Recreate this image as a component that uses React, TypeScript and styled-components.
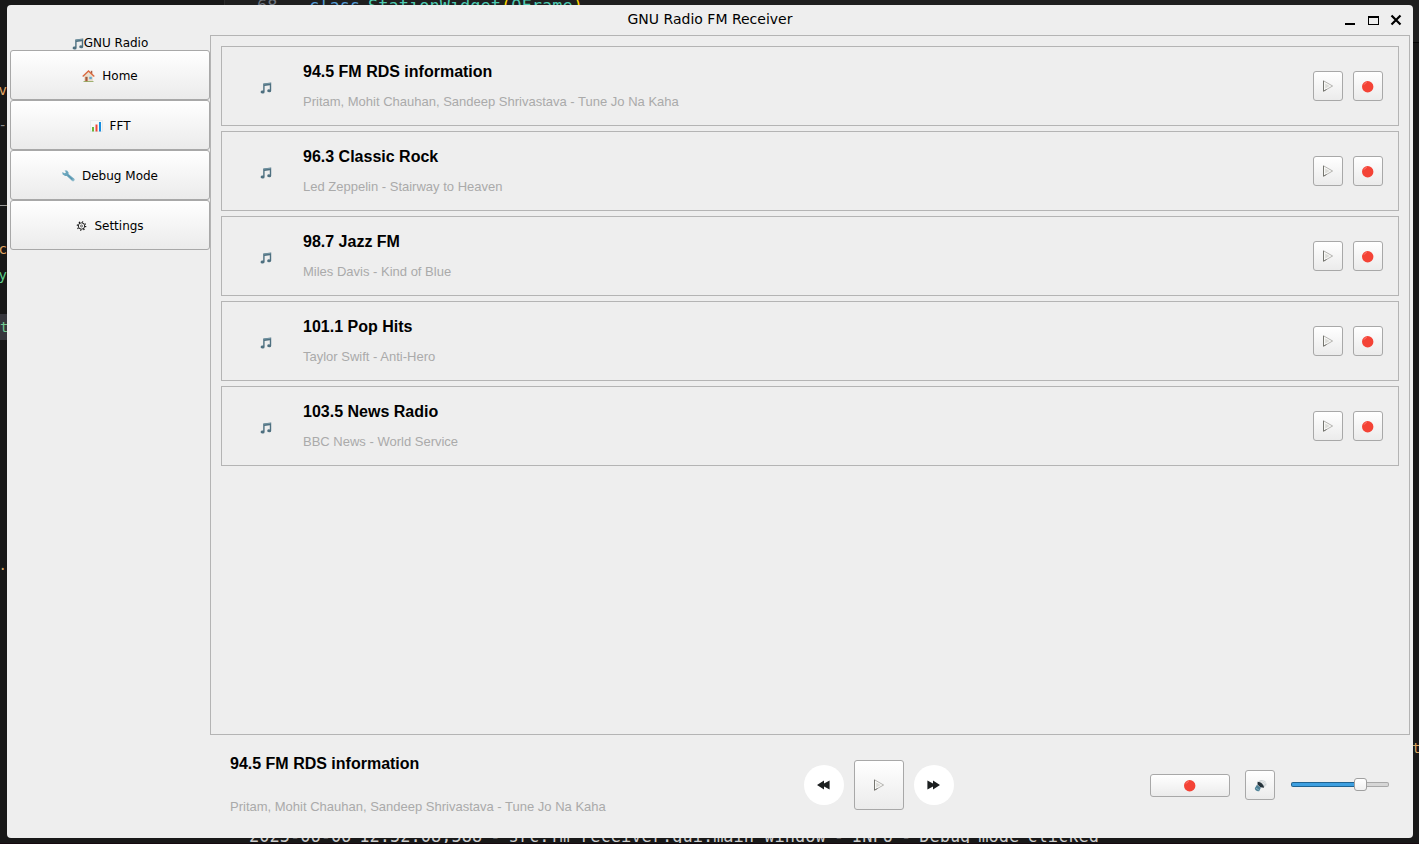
import React, { useState } from "react";
import styled, { createGlobalStyle, css } from "styled-components";

const GlobalStyle = createGlobalStyle`
  *, *::before, *::after { box-sizing: border-box; }
  html, body { margin: 0; padding: 0; background: #181818; }
  button { font: inherit; color: inherit; margin: 0; padding: 0; }
`;

const uiFont = `"DejaVu Sans", sans-serif`;
const textFont = `"Liberation Sans", Arial, sans-serif`;
const codeFont = `"DejaVu Sans Mono", monospace`;

const Desktop = styled.div`
  position: relative;
  min-height: 100vh;
  display: flex;
  padding: 5px 6px 6px 7px;
  background: #181818;
  overflow: hidden;
  font-family: ${uiFont};
`;

/* Code editor and terminal lying under the application window */
const EditorPane = styled.div`
  position: absolute;
  top: 0;
  left: 224px;
  right: 0;
  height: 43px;
  background: #1f1f1f;
  border-left: 1px solid #2b2b2b;
  border-bottom: 1px solid #050505;
`;

const CodeLine = styled.div`
  position: absolute;
  top: -4px;
  left: 32px;
  display: grid;
  grid-template-columns: 52px 59px auto;
  font: 17px/20px ${codeFont};
  white-space: pre;
`;

const LogLine = styled.div`
  position: absolute;
  left: 249px;
  bottom: -2px;
  width: 850px;
  display: flex;
  justify-content: space-between;
  font: 17px/20px ${codeFont};
  color: #cccccc;
  white-space: pre;
`;

const BottomEdge = styled.div`
  position: absolute;
  left: 0;
  right: 0;
  bottom: 0;
  height: 1px;
  background: #14080e;
`;

const Tint = styled.span<{ $c: string }>`
  color: ${(p) => p.$c};
`;

const EdgeGlyph = styled.span<{ $y: number; $c: string; $right?: boolean; $lit?: boolean }>`
  position: absolute;
  top: ${(p) => p.$y}px;
  ${(p) => (p.$right ? "right: 0;" : "left: 0;")}
  width: 7px;
  height: 26px;
  display: flex;
  justify-content: ${(p) => (p.$right || p.$lit ? "flex-start" : "flex-end")};
  align-items: center;
  overflow: hidden;
  font: 14px/26px ${codeFont};
  color: ${(p) => p.$c};
  background: ${(p) => (p.$lit ? "#37373d" : "transparent")};
`;

const Window = styled.main`
  position: relative;
  flex: 1;
  min-width: 0;
  display: flex;
  flex-direction: column;
  background: #eeeeee;
  border-radius: 4px;
  color: #000000;
`;

const TitleBar = styled.header`
  display: grid;
  grid-template-columns: 80px 1fr 80px;
  align-items: center;
  height: 30px;
`;

const WindowTitle = styled.h1`
  grid-column: 2;
  margin: 0;
  padding-bottom: 2px;
  font: 14px/16px ${uiFont};
  text-align: center;
`;

const WindowControls = styled.div`
  display: flex;
  justify-content: flex-end;
  gap: 7px;
  padding-right: 9px;
`;

const WindowButton = styled.button`
  width: 16px;
  height: 16px;
  border: 0;
  background: none;
  svg { display: block; }
`;

const Body = styled.div`
  flex: 1;
  display: flex;
  padding: 0 3px 3px;
`;

const Sidebar = styled.nav`
  width: 200px;
  flex: none;
  display: flex;
  flex-direction: column;
  font-size: 12px;
  line-height: 15px;
`;

const Brand = styled.div`
  display: flex;
  align-items: center;
  justify-content: center;
  height: 15px;
  padding-top: 2px;
`;

const raised = css`
  border: 1px solid #a8a8a8;
  border-radius: 3px;
  background: linear-gradient(#ffffff, #ebebeb);
  display: flex;
  align-items: center;
  justify-content: center;
  svg { display: block; }
`;

const NavButton = styled.button`
  ${raised}
  height: 50px;
  padding-top: 2px;
  gap: 7px;
`;

const Content = styled.div`
  flex: 1;
  min-width: 0;
  display: flex;
  flex-direction: column;
`;

const StationPanel = styled.section`
  flex: 1;
  border: 1px solid #b4b4b4;
  padding: 10px;
`;

const StationList = styled.ul`
  list-style: none;
  margin: 0;
  padding: 0;
  display: flex;
  flex-direction: column;
  gap: 5px;
`;

const StationCard = styled.li`
  height: 80px;
  display: flex;
  align-items: center;
  gap: 10px;
  padding: 0 15px 0 17px;
  border: 1px solid #b4b4b4;
`;

const StationIcon = styled.div`
  flex: none;
  width: 54px;
  display: flex;
  justify-content: center;
  padding-top: 3px;
`;

const TextBlock = styled.div<{ $gap: number; $grow?: boolean }>`
  flex: ${(p) => (p.$grow ? 1 : "none")};
  min-width: 0;
  display: flex;
  flex-direction: column;
  gap: ${(p) => p.$gap}px;
`;

const StationName = styled.h2`
  margin: 0;
  font: bold 16px/18px ${textFont};
`;

const TrackName = styled.p`
  margin: 0;
  font: 13px/16px ${textFont};
  color: #aaaaaa;
`;

const ToolButton = styled.button<{ $w: number; $h: number }>`
  ${raised}
  flex: none;
  width: ${(p) => p.$w}px;
  height: ${(p) => p.$h}px;
`;

const RoundButton = styled.button`
  width: 40px;
  height: 40px;
  border: 0;
  border-radius: 50%;
  background: #ffffff;
  display: flex;
  align-items: center;
  justify-content: center;
`;

const Player = styled.footer`
  height: 100px;
  display: flex;
  align-items: center;
  justify-content: space-between;
  padding: 0 20px;
`;

const Transport = styled.div`
  display: flex;
  align-items: center;
  gap: 10px;
  padding-left: 2px;
`;

const Output = styled.div`
  display: flex;
  align-items: center;
  gap: 15px;
`;

const VolumeSlider = styled.input`
  appearance: none;
  width: 100px;
  height: 16px;
  margin: 0;
  padding: 0 1px 2px;
  background: none;
  &::-webkit-slider-runnable-track {
    height: 5px;
    border: 1px solid transparent;
    border-radius: 2px;
    background:
      linear-gradient(#3d9fe0, #3d9fe0) 0 0 / ${(p) => Number(p.value)}% 100% no-repeat padding-box,
      linear-gradient(#1f6391, #1f6391) 0 0 / ${(p) => Number(p.value)}% 100% no-repeat border-box,
      linear-gradient(#d6d6d6, #d6d6d6) padding-box,
      linear-gradient(#a8a8a8, #a8a8a8) border-box;
  }
  &::-webkit-slider-thumb {
    appearance: none;
    width: 13px;
    height: 13px;
    margin-top: -5px;
    border: 1px solid #a0a0a0;
    border-radius: 3px;
    background: linear-gradient(#ffffff, #f0f0f0);
  }
`;

const NoteIcon = () => (
  <svg width="12" height="12" viewBox="0 0 12 12" aria-hidden="true">
    <path d="M3.2 1.5 11.2.4v8.4a2 1.5 0 1 1-1.4-1.4V3.2L4.6 4v6a2 1.5 0 1 1-1.4-1.4z" fill="#4e7080" />
    <path d="M3.8 1.8 10.6.9v.8l-6.8.9z" fill="#82a3b0" />
  </svg>
);

const HomeIcon = () => (
  <svg width="13" height="12" viewBox="0 0 13 12" aria-hidden="true">
    <path d="M2 5.5 6.5 1.5 11 5.5V11.5H2z" fill="#eadfce" />
    <path d="M8.8.8h1.5v3H8.8z" fill="#a85f43" />
    <path d="M.7 6.4 6.5 1l5.8 5.4" fill="none" stroke="#d9683f" strokeWidth="1.4" />
    <path d="M3.3 6.8h2.3v4.7H3.3z" fill="#a8593a" />
    <path d="M7.3 6.8h2.5v2.4H7.3z" fill="#62a8cf" />
    <path d="M1.5 11h10v.8h-10z" fill="#8aa255" />
  </svg>
);

const ChartIcon = () => (
  <svg width="13" height="12" viewBox="0 0 13 12" aria-hidden="true">
    <path d="M.5.5h12v11H.5z" fill="#f5f7f7" stroke="#dde3e5" strokeWidth=".6" />
    <path d="M2 7h2v4.5H2z" fill="#69b53c" />
    <path d="M5.5 4.5h2v7h-2z" fill="#ef4638" />
    <path d="M9 2h2v9.5H9z" fill="#168de0" />
  </svg>
);

const WrenchIcon = () => (
  <svg width="13" height="12" viewBox="0 0 13 12" aria-hidden="true">
    <path d="M2.6.4 5 .6l1.6 2-.1 1.3 5.7 4.9c1.1 1.1-.6 3.2-2 2.2L4.8 5.9l-1.7.1L.5 4.3.4 2l2 1.3 1.2-.3.2-1z" fill="#6ba6bd" />
    <path d="m5.5 5 5.3 4.8" stroke="#4a87a3" strokeWidth=".7" />
    <circle cx="11" cy="10" r=".6" fill="#e8eef0" />
  </svg>
);

const GearIcon = () => (
  <svg width="11" height="12" viewBox="0 0 11 12" fill="none" stroke="#111111" aria-hidden="true">
    <circle cx="5.5" cy="6" r="3.2" strokeWidth=".9" />
    <circle cx="5.5" cy="6" r="4.2" strokeWidth="1.2" strokeDasharray="1.2 2.1" />
    <circle cx="5.5" cy="6" r="1" strokeWidth=".6" />
  </svg>
);

const PlayIcon = () => (
  <svg width="12" height="12" viewBox="0 0 12 12" aria-hidden="true">
    <path d="M1.5.8v10.4L10.6 6z" fill="#f8f8f6" stroke="#a3a29e" strokeWidth=".8" />
    <path d="M3.2 3.4v5.2L7.8 6z" fill="#dcdcd8" />
    <path d="M1.5.8v10.4l3-1.7" fill="none" stroke="#66665f" strokeWidth=".8" />
  </svg>
);

const RecordIcon = () => (
  <svg width="12" height="14" viewBox="0 0 12 14" aria-hidden="true">
    <circle cx="5.7" cy="7.8" r="5.7" fill="#f44336" />
    <path d="M2 5.7q1-1.9 2.7-2.3" fill="none" stroke="#ff8078" strokeWidth=".9" />
  </svg>
);

const SpeakerIcon = () => (
  <svg width="13" height="14" viewBox="0 0 13 14" aria-hidden="true">
    <path d="M4.5 3.4C6.8.8 13 1.5 12.4 7.2L9.8 9.6z" fill="#d0d6d8" />
    <path d="m6.5 2.8 5 5M8.5 2l3.5 4M6 4.8l5-2.5M8 6.5l4-2.3" stroke="#f4f5f5" strokeWidth=".5" />
    <path d="M3.6 3.8C6.3 3.6 9.9 6.6 10 9.8L6.3 9.2 3.5 6.6z" fill="#26333b" />
    <path d="m3 6.7 3.8 3.1-1.6 3.4c-2 .7-4.8-.9-4.3-3.1z" fill="#4f8196" />
    <path d="m1.9 10 3 2" stroke="#83b2c2" strokeWidth="1" />
  </svg>
);

const SkipIcon = ({ back = false }: { back?: boolean }) => (
  <svg width="13" height="10" viewBox="0 0 13 10" fill="#1c1f20" aria-hidden="true">
    <path d={back ? "M0 5 7 .5v3L12.6.5v9L7 6.5v3z" : "M13 5 6 .5v3L.4.5v9L6 6.5v3z"} />
  </svg>
);

const MinimizeIcon = () => (
  <svg width="16" height="16" viewBox="0 0 16 16" aria-hidden="true">
    <path d="M3 11h10v2H3z" />
  </svg>
);

const MaximizeIcon = () => (
  <svg width="16" height="16" viewBox="0 0 16 16" aria-hidden="true">
    <path fillRule="evenodd" d="M3 4h11v9H3zM4 6v6h9V6z" />
  </svg>
);

const CloseIcon = () => (
  <svg width="16" height="16" viewBox="0 0 16 16" aria-hidden="true">
    <path d="m3.5 3.5 9 9m0-9-9 9" stroke="#000000" strokeWidth="2.2" />
  </svg>
);

const navItems = [
  { label: "Home", Icon: HomeIcon },
  { label: "FFT", Icon: ChartIcon },
  { label: "Debug Mode", Icon: WrenchIcon },
  { label: "Settings", Icon: GearIcon },
];

const stations = [
  { name: "94.5 FM RDS information", track: "Pritam, Mohit Chauhan, Sandeep Shrivastava - Tune Jo Na Kaha" },
  { name: "96.3 Classic Rock", track: "Led Zeppelin - Stairway to Heaven" },
  { name: "98.7 Jazz FM", track: "Miles Davis - Kind of Blue" },
  { name: "101.1 Pop Hits", track: "Taylor Swift - Anti-Hero" },
  { name: "103.5 News Radio", track: "BBC News - World Service" },
];

const logWords = "2025-06-06 12:52:08,588 - src.fm_receiver.gui.main_window - INFO - Debug mode clicked".split(" ");

const Backdrop = () => (
  <div aria-hidden="true">
    <EditorPane>
      <CodeLine>
        <Tint $c="#6e7681">68</Tint>
        <Tint $c="#569cd6">class</Tint>
        <span>
          <Tint $c="#4ec9b0">StationWidget</Tint>
          <Tint $c="#ffd700">(</Tint>
          <Tint $c="#4ec9b0">QFrame</Tint>
          <Tint $c="#ffd700">)</Tint>
        </span>
      </CodeLine>
    </EditorPane>
    <EdgeGlyph $y={77} $c="#e2a765">v</EdgeGlyph>
    <EdgeGlyph $y={112} $c="#8c8c8c">-</EdgeGlyph>
    <EdgeGlyph $y={191} $c="#9a9a9a">—</EdgeGlyph>
    <EdgeGlyph $y={236} $c="#e2a765">c</EdgeGlyph>
    <EdgeGlyph $y={262} $c="#5fcf8c">y</EdgeGlyph>
    <EdgeGlyph $y={314} $c="#73c991" $lit>t.</EdgeGlyph>
    <EdgeGlyph $y={552} $c="#d7a564">s.</EdgeGlyph>
    <EdgeGlyph $y={735} $c="#d7a564" $right>th</EdgeGlyph>
    <LogLine>
      {logWords.map((word, i) => (
        <span key={i}>{word}</span>
      ))}
    </LogLine>
    <BottomEdge />
  </div>
);

export default function App() {
  const [volume, setVolume] = useState(75);
  const current = stations[0];

  return (
    <Desktop>
      <GlobalStyle />
      <Backdrop />
      <Window>
        <TitleBar>
          <WindowTitle>GNU Radio FM Receiver</WindowTitle>
          <WindowControls>
            <WindowButton aria-label="Minimize"><MinimizeIcon /></WindowButton>
            <WindowButton aria-label="Maximize"><MaximizeIcon /></WindowButton>
            <WindowButton aria-label="Close"><CloseIcon /></WindowButton>
          </WindowControls>
        </TitleBar>
        <Body>
          <Sidebar>
            <Brand><NoteIcon />GNU Radio</Brand>
            {navItems.map(({ label, Icon }) => (
              <NavButton key={label}><Icon />{label}</NavButton>
            ))}
          </Sidebar>
          <Content>
            <StationPanel>
              <StationList>
                {stations.map((s) => (
                  <StationCard key={s.name}>
                    <StationIcon><NoteIcon /></StationIcon>
                    <TextBlock $gap={13} $grow>
                      <StationName>{s.name}</StationName>
                      <TrackName>{s.track}</TrackName>
                    </TextBlock>
                    <ToolButton $w={30} $h={30} aria-label={`Play ${s.name}`}><PlayIcon /></ToolButton>
                    <ToolButton $w={30} $h={30} aria-label={`Record ${s.name}`}><RecordIcon /></ToolButton>
                  </StationCard>
                ))}
              </StationList>
            </StationPanel>
            <Player>
              <TextBlock $gap={26}>
                <StationName>{current.name}</StationName>
                <TrackName>{current.track}</TrackName>
              </TextBlock>
              <Transport>
                <RoundButton aria-label="Previous station"><SkipIcon back /></RoundButton>
                <ToolButton $w={50} $h={50} aria-label="Play"><PlayIcon /></ToolButton>
                <RoundButton aria-label="Next station"><SkipIcon /></RoundButton>
              </Transport>
              <Output>
                <ToolButton $w={80} $h={23} aria-label="Record"><RecordIcon /></ToolButton>
                <ToolButton $w={30} $h={30} aria-label="Mute"><SpeakerIcon /></ToolButton>
                <VolumeSlider
                  type="range"
                  min={0}
                  max={100}
                  value={volume}
                  aria-label="Volume"
                  onChange={(e) => setVolume(Number(e.target.value))}
                />
              </Output>
            </Player>
          </Content>
        </Body>
      </Window>
    </Desktop>
  );
}
